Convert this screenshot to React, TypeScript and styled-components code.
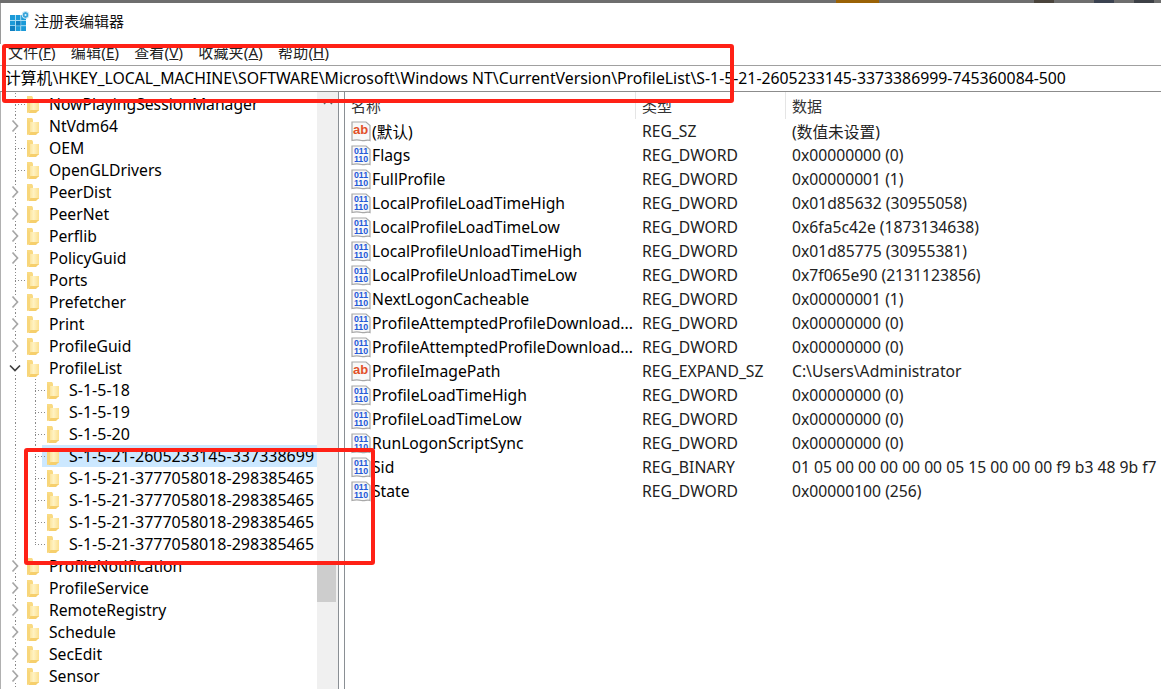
import styled, { createGlobalStyle } from "styled-components";

const GlobalStyle = createGlobalStyle`
  html, body {
    margin: 0;
    padding: 0;
    background: #fff;
    overflow: hidden;
  }
  * {
    box-sizing: border-box;
  }
`;

const FONT = `"Noto Sans", "Noto Sans CJK SC", sans-serif`;

const MENUS = [
  ["文件(", "F", ")"],
  ["编辑(", "E", ")"],
  ["查看(", "V", ")"],
  ["收藏夹(", "A", ")"],
  ["帮助(", "H", ")"],
];

const PATH =
  "计算机\\HKEY_LOCAL_MACHINE\\SOFTWARE\\Microsoft\\Windows NT\\CurrentVersion\\ProfileList\\S-1-5-21-2605233145-3373386999-745360084-500";

type TreeItem = {
  label: string;
  level: 0 | 1;
  toggle?: "closed" | "open";
  selected?: boolean;
  last?: boolean;
};

const TREE: TreeItem[] = [
  { label: "NowPlayingSessionManager", level: 0 },
  { label: "NtVdm64", level: 0, toggle: "closed" },
  { label: "OEM", level: 0 },
  { label: "OpenGLDrivers", level: 0 },
  { label: "PeerDist", level: 0, toggle: "closed" },
  { label: "PeerNet", level: 0, toggle: "closed" },
  { label: "Perflib", level: 0, toggle: "closed" },
  { label: "PolicyGuid", level: 0, toggle: "closed" },
  { label: "Ports", level: 0 },
  { label: "Prefetcher", level: 0, toggle: "closed" },
  { label: "Print", level: 0, toggle: "closed" },
  { label: "ProfileGuid", level: 0, toggle: "closed" },
  { label: "ProfileList", level: 0, toggle: "open" },
  { label: "S-1-5-18", level: 1 },
  { label: "S-1-5-19", level: 1 },
  { label: "S-1-5-20", level: 1 },
  { label: "S-1-5-21-2605233145-337338699", level: 1, selected: true },
  { label: "S-1-5-21-3777058018-298385465", level: 1 },
  { label: "S-1-5-21-3777058018-298385465", level: 1 },
  { label: "S-1-5-21-3777058018-298385465", level: 1 },
  { label: "S-1-5-21-3777058018-298385465", level: 1, last: true },
  { label: "ProfileNotification", level: 0, toggle: "closed" },
  { label: "ProfileService", level: 0, toggle: "closed" },
  { label: "RemoteRegistry", level: 0, toggle: "closed" },
  { label: "Schedule", level: 0, toggle: "closed" },
  { label: "SecEdit", level: 0, toggle: "closed" },
  { label: "Sensor", level: 0, toggle: "closed" },
];

const VALUES: [string, string, string][] = [
  ["(默认)", "REG_SZ", "(数值未设置)"],
  ["Flags", "REG_DWORD", "0x00000000 (0)"],
  ["FullProfile", "REG_DWORD", "0x00000001 (1)"],
  ["LocalProfileLoadTimeHigh", "REG_DWORD", "0x01d85632 (30955058)"],
  ["LocalProfileLoadTimeLow", "REG_DWORD", "0x6fa5c42e (1873134638)"],
  ["LocalProfileUnloadTimeHigh", "REG_DWORD", "0x01d85775 (30955381)"],
  ["LocalProfileUnloadTimeLow", "REG_DWORD", "0x7f065e90 (2131123856)"],
  ["NextLogonCacheable", "REG_DWORD", "0x00000001 (1)"],
  ["ProfileAttemptedProfileDownload...", "REG_DWORD", "0x00000000 (0)"],
  ["ProfileAttemptedProfileDownload...", "REG_DWORD", "0x00000000 (0)"],
  ["ProfileImagePath", "REG_EXPAND_SZ", "C:\\Users\\Administrator"],
  ["ProfileLoadTimeHigh", "REG_DWORD", "0x00000000 (0)"],
  ["ProfileLoadTimeLow", "REG_DWORD", "0x00000000 (0)"],
  ["RunLogonScriptSync", "REG_DWORD", "0x00000000 (0)"],
  ["Sid", "REG_BINARY", "01 05 00 00 00 00 00 05 15 00 00 00 f9 b3 48 9b f7"],
  ["State", "REG_DWORD", "0x00000100 (256)"],
];

function AppIcon() {
  return (
    <svg width="20" height="20" viewBox="0 0 20 20">
      <rect x="0" y="4" width="16" height="16" fill="#1b9ad8" />
      <path d="M5.500 4v16M10.700 4v16M0 9.500h16M0 14.700h16" stroke="#a9dcf3" strokeWidth="1" />
      <path d="M6 10h4.500v4.500H6zM0 15h5v5H0z" fill="#0f7fc0" />
      <circle cx="15.500" cy="4" r="3.400" fill="#38a4da" stroke="#d5edf8" strokeWidth="1" />
      <circle cx="15.500" cy="4" r="1" fill="#e3f4fb" />
    </svg>
  );
}

function FolderIcon() {
  return (
    <svg width="12" height="17" viewBox="0 0 12 17">
      <defs>
        <linearGradient id="folderFront" x1="0" y1="0" x2="1" y2="0">
          <stop offset="0" stopColor="#f9d97f" />
          <stop offset="0.55" stopColor="#fff2c2" />
          <stop offset="1" stopColor="#fce08f" />
        </linearGradient>
      </defs>
      <path d="M0 0h5l1 1.500V15H0z" fill="#f9da82" />
      <path d="M3 4h9v11H3l-3 2z" fill="url(#folderFront)" />
      <path d="M0 17V2c2 .6 3 1.400 3 2.500V15z" fill="#f8d67a" />
      <path d="M12 14H3.500L1 17h8z" fill="#f6cf6c" />
    </svg>
  );
}

function Chevron({ open }: { open: boolean }) {
  return (
    <ChevronSvg width="14" height="14" viewBox="0 0 14 14">
      {open ? (
        <path d="M2 4.500l5 5 5-5" fill="none" stroke="#404040" strokeWidth="1.700" />
      ) : (
        <path d="M4.500 1.500l5 5.500-5 5.500" fill="none" stroke="#a6a6a6" strokeWidth="1.700" />
      )}
    </ChevronSvg>
  );
}

function ValueIcon({ text }: { text: boolean }) {
  return (
    <svg width="20" height="21" viewBox="0 0 20 21">
      <path
        d="M1 1h14l4 3.500V19.500c-3-1.600-5 1-8.500 0S4.500 18.500 1 19.500z"
        fill="#f8f8f8"
        stroke="#a8a8a8"
        strokeWidth="1.200"
      />
      {text ? (
        <IconText x="9.500" y="13" fontSize="13" fill="#e2502a">
          ab
        </IconText>
      ) : (
        <g>
          <IconText x="10" y="9" fontSize="8.800" fill="#2458d8">
            011
          </IconText>
          <IconText x="10" y="17" fontSize="8.800" fill="#2458d8">
            110
          </IconText>
        </g>
      )}
    </svg>
  );
}

export default function App() {
  return (
    <Window>
      <GlobalStyle />
      <BackdropStrip>
        <BackdropSpot $left={836} $width={43} $color="#9a6206" />
        <BackdropSpot $left={1034} $width={20} $color="#4a443c" />
        <BackdropSpot $left={1094} $width={20} $color="#3b4250" />
        <BackdropSpot $left={1134} $width={20} $color="#3d4046" />
      </BackdropStrip>
      <TitleBar>
        <AppIcon />
        <TitleText>注册表编辑器</TitleText>
      </TitleBar>
      <MenuBar>
        {MENUS.map(([head, key, tail]) => (
          <MenuItem key={key}>
            {head}
            <u>{key}</u>
            {tail}
          </MenuItem>
        ))}
      </MenuBar>
      <AddressBar>{PATH}</AddressBar>
      <Panes>
        <TreePane>
          <TreeRows>
            {TREE.map((item, i) => (
              <TreeRow key={i} $selected={!!item.selected} $level={item.level}>
                <TrunkGuide />
                {item.level === 1 && <BranchGuide $last={!!item.last} />}
                <Toggle>
                  {item.toggle ? (
                    <Chevron open={item.toggle === "open"} />
                  ) : (
                    <Stub />
                  )}
                </Toggle>
                <FolderIcon />
                <TreeLabel $level={item.level}>{item.label}</TreeLabel>
              </TreeRow>
            ))}
          </TreeRows>
          <Scrollbar>
            <ScrollUp>
              <svg width="10" height="6" viewBox="0 0 10 6">
                <path d="M1 5l4-4 4 4" fill="none" stroke="#606060" strokeWidth="1.500" />
              </svg>
            </ScrollUp>
            <ScrollThumb />
          </Scrollbar>
        </TreePane>
        <ListPane>
          <ListHeader>
            <HeaderCell $width={291} $divider>
              名称
            </HeaderCell>
            <HeaderCell $width={150} $divider>
              类型
            </HeaderCell>
            <HeaderCell $width={300}>数据</HeaderCell>
          </ListHeader>
          {VALUES.map(([name, type, data], i) => (
            <ListRow key={i}>
              <NameCell>
                <ValueIcon text={type === "REG_SZ" || type === "REG_EXPAND_SZ"} />
                <span>{name}</span>
              </NameCell>
              <TypeCell>{type}</TypeCell>
              <DataCell>{data}</DataCell>
            </ListRow>
          ))}
        </ListPane>
      </Panes>
      <Highlight $left={2} $top={44} $width={732} $height={59} />
      <Highlight $left={24} $top={448} $width={351} $height={117} />
    </Window>
  );
}

const Window = styled.div`
  position: relative;
  width: 1161px;
  height: 689px;
  overflow: hidden;
  background: #fff;
  color: #000;
  font-family: ${FONT};
  font-size: 15.7px;
`;

const IconText = styled.text`
  font-family: "Liberation Sans", sans-serif;
  font-weight: 700;
  text-anchor: middle;
`;

const ChevronSvg = styled.svg`
  position: relative;
  background: #fff;
`;

const BackdropStrip = styled.div`
  position: relative;
  height: 3px;
  background: #6e6e6e;
`;

const BackdropSpot = styled.div<{ $left: number; $width: number; $color: string }>`
  position: absolute;
  top: 0;
  bottom: 0;
  left: ${(p) => p.$left}px;
  width: ${(p) => p.$width}px;
  background: ${(p) => p.$color};
`;

const TitleBar = styled.div`
  height: 41px;
  padding: 0 0 6px 9px;
  display: flex;
  align-items: center;
  gap: 4px;
  border-left: 1px solid #9a9a9a;
`;

const TitleText = styled.div`
  font-size: 15px;
  line-height: 20px;
  color: #111;
`;

const MenuBar = styled.div`
  height: 21px;
  padding: 0 0 5px 8px;
  display: flex;
  align-items: center;
  gap: 15px;
`;

const MenuItem = styled.div`
  font-size: 15px;
  letter-spacing: 0.2px;
  line-height: 20px;
  white-space: nowrap;
  color: #222;
`;

const AddressBar = styled.div`
  height: 27px;
  padding-left: 5px;
  border-top: 1px solid #a0a0a0;
  border-bottom: 1px solid #8c8c8c;
  font-size: 15.8px;
  line-height: 25px;
  white-space: nowrap;
  overflow: hidden;
`;

const Panes = styled.div`
  display: flex;
  height: 597px;
`;

const TreePane = styled.div`
  width: 339px;
  display: flex;
  border-left: 1px solid #b0b0b0;
  border-right: 1px solid #8a8f94;
  overflow: hidden;
`;

const TreeRows = styled.div`
  width: 316px;
  flex: none;
  margin-top: 1px;
`;

const TreeRow = styled.div<{ $selected: boolean; $level: number }>`
  position: relative;
  height: 22px;
  display: flex;
  align-items: center;
  padding-left: ${(p) => (p.$level === 1 ? 25 : 5)}px;
  background: ${(p) =>
    p.$selected
      ? "linear-gradient(to right, transparent 41px, #cce8ff 41px)"
      : "transparent"};
`;

const dots = "repeating-linear-gradient(to bottom, #8a8a8a 0 1px, transparent 1px 3px)";

const TrunkGuide = styled.span`
  position: absolute;
  left: 14px;
  top: 0;
  bottom: 0;
  width: 1px;
  background: ${dots};
`;

const BranchGuide = styled.span<{ $last: boolean }>`
  position: absolute;
  left: 34px;
  top: 0;
  width: 1px;
  height: ${(p) => (p.$last ? 11 : 22)}px;
  background: ${dots};
`;

const Toggle = styled.span`
  position: relative;
  width: 21px;
  height: 100%;
  flex: none;
  padding-right: 3px;
  display: flex;
  align-items: center;
  justify-content: center;
`;

const Stub = styled.span`
  position: absolute;
  left: 9px;
  right: 1px;
  top: 11px;
  height: 1px;
  background: repeating-linear-gradient(to right, #8a8a8a 0 1px, transparent 1px 3px);
`;

const TreeLabel = styled.span<{ $level: number }>`
  flex: 1;
  margin-left: 10px;
  font-size: ${(p) => (p.$level === 1 ? 16 : 15.7)}px;
  line-height: 22px;
  white-space: nowrap;
  overflow: hidden;
`;

const Scrollbar = styled.div`
  position: relative;
  flex: 1;
  background: #f0f0f0;
`;

const ScrollUp = styled.div`
  height: 22px;
  padding-top: 7px;
  display: flex;
  justify-content: center;
`;

const ScrollThumb = styled.div`
  position: absolute;
  left: 0;
  right: 2px;
  top: 473px;
  height: 37px;
  background: #cdcdcd;
`;

const ListPane = styled.div`
  flex: 1;
  margin-left: 5px;
  border-left: 1px solid #8a8f94;
  overflow: hidden;
`;

const ListHeader = styled.div`
  height: 27px;
  display: flex;
  white-space: nowrap;
`;

const HeaderCell = styled.div<{ $width: number; $divider?: boolean }>`
  width: ${(p) => p.$width}px;
  flex: none;
  padding-left: 6px;
  border-right: ${(p) => (p.$divider ? "1px solid #e5e5e5" : "none")};
  font-size: 15px;
  line-height: 28px;
  color: #333;
`;

const ListRow = styled.div`
  height: 24px;
  display: flex;
  align-items: center;
  white-space: nowrap;
`;

const NameCell = styled.div`
  width: 291px;
  flex: none;
  display: flex;
  align-items: center;
  gap: 1px;
  padding-left: 6px;
  overflow: hidden;
`;

const TypeCell = styled.div`
  width: 150px;
  flex: none;
  padding-left: 6px;
  color: #222;
`;

const DataCell = styled.div`
  padding-left: 6px;
  color: #222;
`;

const Highlight = styled.div<{
  $left: number;
  $top: number;
  $width: number;
  $height: number;
}>`
  position: absolute;
  left: ${(p) => p.$left}px;
  top: ${(p) => p.$top}px;
  width: ${(p) => p.$width}px;
  height: ${(p) => p.$height}px;
  border: 4px solid #ff2116;
  border-radius: 3px;
  pointer-events: none;
`;
